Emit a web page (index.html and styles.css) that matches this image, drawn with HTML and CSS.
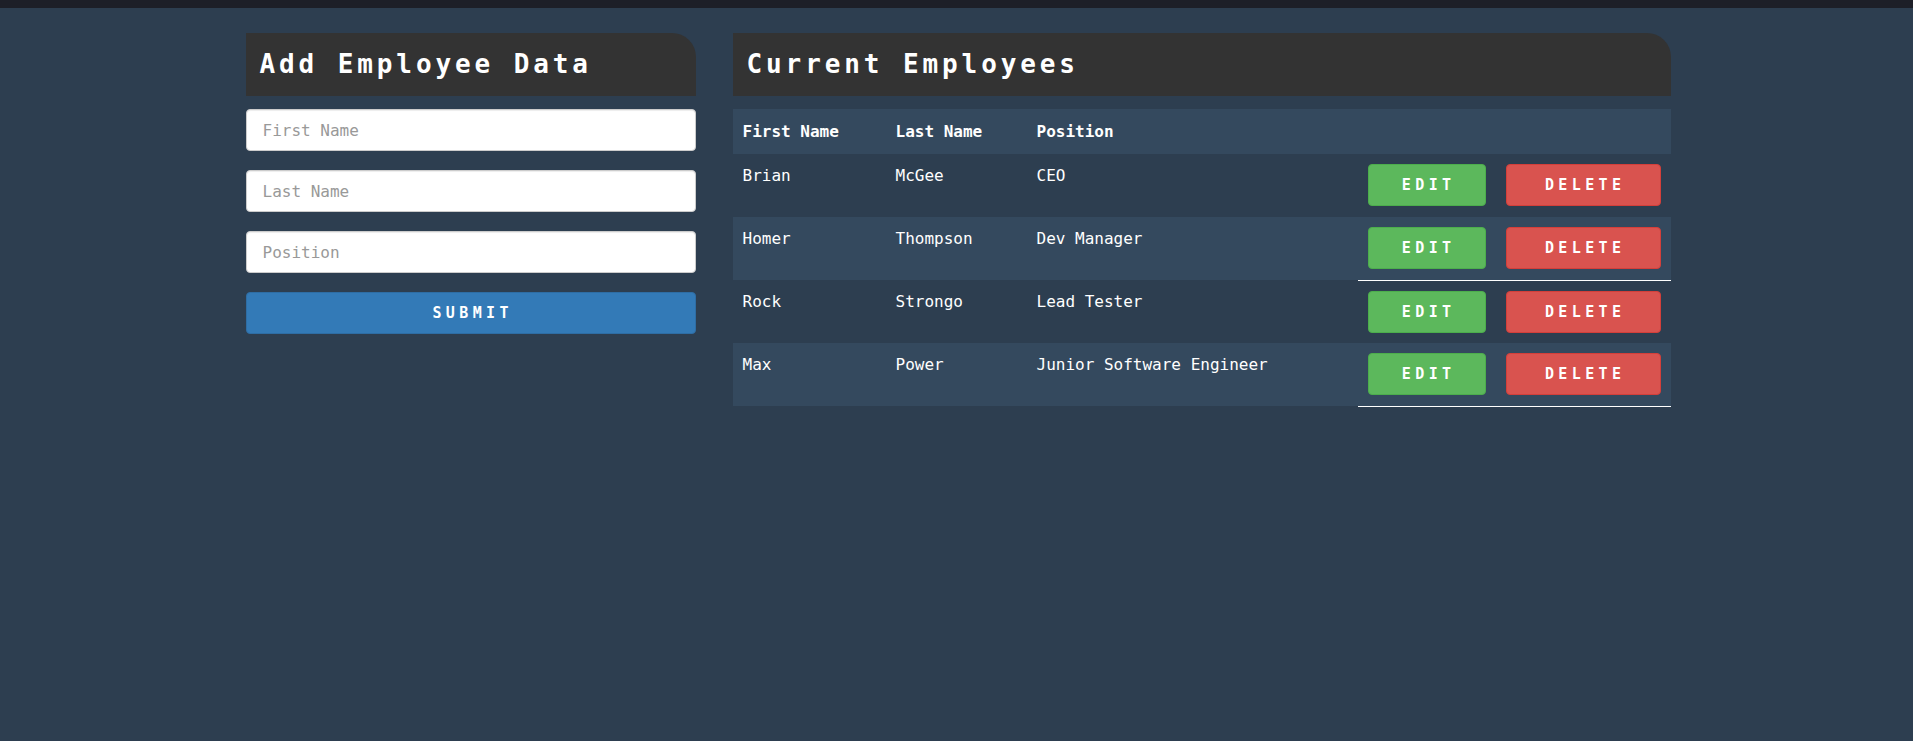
FILE: index.html
```html
<!DOCTYPE html>
<html>
<head>
<meta charset="utf-8">
<title>Employees</title>
<link rel="stylesheet" href="styles.css">
</head>
<body>
<div class="topbar"></div>
<div class="container">
  <section class="panel panel-left">
    <h1 class="panel-title">Add Employee Data</h1>
    <form class="form">
      <input class="field" type="text" placeholder="First Name">
      <input class="field" type="text" placeholder="Last Name">
      <input class="field" type="text" placeholder="Position">
      <button class="btn btn-submit" type="button">SUBMIT</button>
    </form>
  </section>
  <section class="panel panel-right">
    <h1 class="panel-title">Current Employees</h1>
    <table class="emp-table">
      <colgroup>
        <col class="c-first"><col class="c-last"><col class="c-pos"><col class="c-act">
      </colgroup>
      <thead>
        <tr><th>First Name</th><th>Last Name</th><th>Position</th><th></th></tr>
      </thead>
      <tbody>
        <tr>
          <td>Brian</td><td>McGee</td><td>CEO</td>
          <td class="actions"><button class="btn btn-edit" type="button">EDIT</button><button class="btn btn-delete" type="button">DELETE</button></td>
        </tr>
        <tr class="alt">
          <td>Homer</td><td>Thompson</td><td>Dev Manager</td>
          <td class="actions underline"><button class="btn btn-edit" type="button">EDIT</button><button class="btn btn-delete" type="button">DELETE</button></td>
        </tr>
        <tr>
          <td>Rock</td><td>Strongo</td><td>Lead Tester</td>
          <td class="actions"><button class="btn btn-edit" type="button">EDIT</button><button class="btn btn-delete" type="button">DELETE</button></td>
        </tr>
        <tr class="alt">
          <td>Max</td><td>Power</td><td>Junior Software Engineer</td>
          <td class="actions underline"><button class="btn btn-edit" type="button">EDIT</button><button class="btn btn-delete" type="button">DELETE</button></td>
        </tr>
      </tbody>
    </table>
  </section>
</div>
</body>
</html>
```
FILE: styles.css
```css
* { box-sizing: border-box; }
html, body {
  margin: 0;
  padding: 0;
  background: #2d3e50;
  min-height: 100%;
}
body {
  font-family: "DejaVu Sans Mono", "Liberation Mono", monospace;
  color: #ffffff;
  font-size: 16px;
}
.topbar {
  height: 8px;
  background: #1d1f28;
}
.container {
  display: flex;
  justify-content: center;
  gap: 37px;
  padding-top: 25px;
  padding-left: 3px;
}
.panel-left { width: 450px; }
.panel-right { width: 938px; }
.panel-title {
  margin: 0;
  height: 63px;
  background: #333333;
  border-top-right-radius: 24px;
  color: #ffffff;
  font-size: 26px;
  font-weight: bold;
  letter-spacing: 3.9px;
  line-height: 63px;
  padding-left: 14px;
}
.form {
  display: flex;
  flex-direction: column;
  gap: 19px;
  margin-top: 13px;
}
.field {
  height: 42px;
  width: 100%;
  border: 1px solid #cccccc;
  border-radius: 4px;
  background: #ffffff;
  box-shadow: inset 0 1px 1px rgba(0,0,0,0.075);
  padding: 0 16px;
  font-family: "DejaVu Sans Mono", "Liberation Mono", monospace;
  font-size: 16px;
  color: #333;
}
.field::placeholder { color: #999999; }
.btn {
  font-family: "DejaVu Sans Mono", "Liberation Mono", monospace;
  font-weight: bold;
  font-size: 15px;
  letter-spacing: 4.4px;
  padding: 0 0 0 4.4px;
  color: #ffffff;
  border-radius: 4px;
  border: 1px solid transparent;
  height: 42px;
  cursor: pointer;
}
.btn-submit {
  width: 100%;
  background: #337ab7;
  border-color: #2e6da4;
}
.btn-edit {
  width: 118px;
  background: #5cb85c;
  border-color: #4cae4c;
}
.btn-delete {
  width: 155px;
  background: #d9534f;
  border-color: #d43f3a;
  margin-left: 20px;
}
.emp-table {
  width: 100%;
  margin-top: 13px;
  border-collapse: collapse;
  table-layout: fixed;
}
.c-first { width: 153px; }
.c-last { width: 141px; }
.c-pos { width: 331px; }
.c-act { width: 313px; }
.emp-table thead tr {
  background: #34495e;
  height: 45px;
}
.emp-table th {
  text-align: left;
  font-weight: bold;
  padding: 0 10px;
  vertical-align: middle;
}
.emp-table td {
  vertical-align: top;
  padding: 11px 10px 0;
  height: 63px;
  line-height: 21px;
}
.emp-table tr.alt { background: #34495e; }
.emp-table td.actions {
  padding: 10px 10px 0;
  white-space: nowrap;
}
.emp-table td.actions .btn { vertical-align: top; }
.emp-table td.underline {
  border-bottom: 1px solid #ffffff;
}
```
